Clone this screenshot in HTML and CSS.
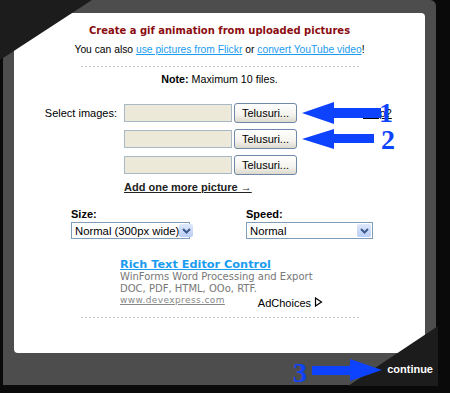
FILE: index.html
```html
<!DOCTYPE html>
<html lang="en">
<head>
  <meta charset="UTF-8">
  <title>Create a gif animation</title>
  <link rel="stylesheet" href="styles.css">
</head>
<body>
  <div class="frame">
    <div class="card">
      <h1 class="title">Create a gif animation from uploaded pictures</h1>
      <p class="sub">You can also <a href="#">use pictures from Flickr</a> or <a href="#">convert YouTube video</a>!</p>
      <div class="sep"></div>
      <p class="note"><b>Note:</b> Maximum 10 files.</p>

      <div class="files">
        <div class="row">
          <span class="label">Select images:</span>
          <span class="field"></span>
          <span class="browse">Telusuri...</span>
          <a class="help" href="#">Help?</a>
        </div>
        <div class="row">
          <span class="label"></span>
          <span class="field"></span>
          <span class="browse">Telusuri...</span>
        </div>
        <div class="row">
          <span class="label"></span>
          <span class="field"></span>
          <span class="browse">Telusuri...</span>
        </div>
        <a class="more" href="#">Add one more picture &rarr;</a>
      </div>

      <div class="options">
        <div class="opt size">
          <b>Size:</b>
          <div class="select">
            <span>Normal (300px wide)</span>
            <span class="drop"><svg width="9" height="6" viewBox="0 0 9 6"><path d="M1 1l3.5 3.5L8 1" fill="none" stroke="#3d5a8c" stroke-width="2"/></svg></span>
          </div>
        </div>
        <div class="opt speed">
          <b>Speed:</b>
          <div class="select">
            <span>Normal</span>
            <span class="drop"><svg width="9" height="6" viewBox="0 0 9 6"><path d="M1 1l3.5 3.5L8 1" fill="none" stroke="#3d5a8c" stroke-width="2"/></svg></span>
          </div>
        </div>
      </div>

      <div class="ad">
        <a class="ad-title" href="#">Rich Text Editor Control</a>
        <div class="ad-text">WinForms Word Processing and Export</div>
        <div class="ad-text">DOC, PDF, HTML, OOo, RTF.</div>
        <div class="ad-foot">
          <a class="ad-url" href="#">www.devexpress.com</a>
          <span class="adchoices">AdChoices <svg width="9" height="10" viewBox="0 0 9 10"><path d="M1.5 1v8l6-4z" fill="none" stroke="#000" stroke-width="1.2"/></svg></span>
        </div>
      </div>
      <div class="sep sep-bottom"></div>
    </div>
    <div class="footer"><span class="continue">continue</span></div>
  </div>

  <!-- corner folds -->
  <svg class="corners" width="450" height="393">
    <polygon points="0,0 92,0 0,60" fill="#1c1c1c"/>
    <polygon points="438,326 438,386 348,386" fill="#1c1c1c"/>
  </svg>

  <!-- hand-drawn annotations -->
  <svg class="marks" width="450" height="393">
    <polygon points="302,113 334,102 334,108 381,108 381,118 334,118 334,124" fill="#0d43ff"/>
    <text x="379" y="122" class="num">1</text>
    <polygon points="302,139 334,129 334,134 374,134 374,143 334,143 334,149" fill="#0d43ff"/>
    <text x="381" y="149" class="num">2</text>
    <polygon points="382,370 350,359 350,366 312,366 312,375 350,375 350,381" fill="#0d43ff"/>
    <text x="293" y="382" class="num">3</text>
  </svg>
</body>
</html>
```

FILE: styles.css
```css
/* General Styling */
body {
  margin: 0;
  width: 450px;
  height: 393px;
  background: #0a0a0a;
  font-family: 'Liberation Sans', Arial, sans-serif;
  font-size: 11px;
  color: #000;
  overflow: hidden;
  position: relative;
}

a {
  color: #1a9cf0;
}

.frame {
  margin-left: 3px;
  width: 433px;
  height: 385px;
  background: #4d4d4d;
  border-top-right-radius: 6px;
  padding-top: 13px;
  box-sizing: border-box;
}

.card {
  margin: 0 11px;
  height: 340px;
  background: #fff;
  border-radius: 4px;
  padding-top: 10px;
  box-sizing: border-box;
}

.title {
  margin: 0;
  font-family: 'DejaVu Sans Condensed', 'DejaVu Sans', sans-serif;
  font-size: 11.1px;
  line-height: 15px;
  color: #8b0d10;
  text-align: center;
}

.sub {
  margin: 5px 0 0;
  font-size: 10.3px;
  line-height: 13px;
  text-align: center;
}

.sep {
  width: 278px;
  margin: 10px auto 0;
  height: 1px;
  background: repeating-linear-gradient(to right, #c8c8c8 0 2px, transparent 2px 4px);
}

.note {
  margin: 6px 0 0;
  font-size: 10.7px;
  line-height: 13px;
  text-align: center;
}

/* File inputs */
.files {
  margin-top: 17px;
}

.row {
  display: flex;
  align-items: center;
  height: 20px;
  margin-bottom: 6px;
}

.label {
  width: 103px;
  text-align: right;
  margin-right: 7px;
}

.field {
  width: 108px;
  height: 18px;
  box-sizing: border-box;
  background: #ece9d8;
  border: 1px solid #a9b8c8;
  margin-right: 2px;
}

.browse {
  width: 63px;
  height: 20px;
  box-sizing: border-box;
  border: 1px solid #6f87a8;
  border-radius: 3px;
  background: linear-gradient(#fff, #f4f3ee 60%, #dcd9cc);
  font-size: 11px;
  line-height: 18px;
  text-align: center;
}

.help {
  margin-left: 66px;
  color: #000;
}

.more {
  display: block;
  margin: 1px 0 0 110px;
  font-weight: bold;
  color: #222;
  line-height: 13px;
}

/* Size / speed */
.options {
  display: flex;
  margin-top: 14px;
}

.opt b {
  display: block;
  line-height: 13px;
  margin-bottom: 1px;
}

.size {
  margin-left: 57px;
  width: 119px;
}

.speed {
  margin-left: 56px;
  width: 127px;
}

.select {
  display: flex;
  align-items: center;
  justify-content: space-between;
  height: 17px;
  box-sizing: border-box;
  border: 1px solid #7f9db9;
  padding-left: 3px;
  font-size: 11.3px;
  white-space: nowrap;
}

.drop {
  flex: none;
  width: 14px;
  height: 13px;
  margin-right: 1px;
  background: linear-gradient(#dfe8fb, #b9cdf6);
  border-radius: 2px;
  display: flex;
  align-items: center;
  justify-content: center;
}

/* Ad */
.ad {
  margin: 20px 0 0 106px;
  width: 200px;
  font-family: 'DejaVu Sans', Verdana, sans-serif;
}

.ad-title {
  display: block;
  font-weight: bold;
  font-size: 11.3px;
  line-height: 12px;
  white-space: nowrap;
}

.ad-text {
  font-size: 10px;
  line-height: 12px;
  color: #777;
  white-space: nowrap;
}

.ad-foot {
  display: flex;
  align-items: flex-end;
}

.ad-url {
  font-size: 9px;
  line-height: 10px;
  color: #888;
  letter-spacing: 0.4px;
}

.adchoices {
  margin-left: 33px;
  margin-bottom: -4px;
  font-family: 'Liberation Sans', Arial, sans-serif;
  font-size: 11px;
  white-space: nowrap;
}

.sep-bottom {
  margin-top: 12px;
}

.footer {
  height: 32px;
  display: flex;
  align-items: center;
  justify-content: flex-end;
  padding-right: 3px;
  position: relative;
  z-index: 2;
}

.continue {
  color: #fff;
  font-weight: bold;
  font-size: 11px;
}

/* Overlays */
.corners,
.marks {
  position: absolute;
  top: 0;
  left: 0;
  pointer-events: none;
}

.corners {
  z-index: 1;
}

.marks {
  z-index: 3;
}

.num {
  font-family: 'Liberation Serif', 'Times New Roman', serif;
  font-weight: bold;
  font-size: 28px;
  fill: #0d43ff;
}
```
